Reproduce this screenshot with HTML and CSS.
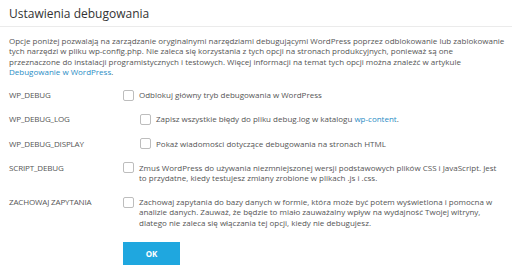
FILE: index.html
```html
<!DOCTYPE html>
<html lang="pl">
<head>
<meta charset="utf-8">
<title>Ustawienia debugowania</title>
<link rel="stylesheet" href="styles.css">
</head>
<body>
<div class="dialog">
  <header class="head">
    <h1 class="title">Ustawienia debugowania</h1>
  </header>
  <div class="content">
    <p class="intro">Opcje poniżej pozwalają na zarządzanie oryginalnymi narzędziami debugującymi WordPress poprzez odblokowanie lub zablokowanie tych narzędzi w pliku wp-config.php. Nie zaleca się korzystania z tych opcji na stronach produkcyjnych, ponieważ są one<br>przeznaczone do instalacji programistycznych i testowych. Więcej informacji na temat tych opcji można znaleźć w artykule <a class="link" href="#">Debugowanie w WordPress</a>.</p>

    <div class="row">
      <div class="label">WP_DEBUG</div>
      <label class="opt"><span class="box"></span><span class="txt">Odblokuj główny tryb debugowania w WordPress</span></label>
    </div>
    <div class="row">
      <div class="label">WP_DEBUG_LOG</div>
      <label class="opt nested"><span class="box"></span><span class="txt">Zapisz wszystkie błędy do pliku debug.log w katalogu <a class="link" href="#">wp-content</a>.</span></label>
    </div>
    <div class="row">
      <div class="label">WP_DEBUG_DISPLAY</div>
      <label class="opt nested"><span class="box"></span><span class="txt">Pokaż wiadomości dotyczące debugowania na stronach HTML</span></label>
    </div>
    <div class="row">
      <div class="label">SCRIPT_DEBUG</div>
      <label class="opt"><span class="box"></span><span class="txt">Zmuś WordPress do używania niezmniejszonej wersji podstawowych plików CSS i JavaScript. Jest to przydatne, kiedy testujesz zmiany zrobione w plikach .js i .css.</span></label>
    </div>
    <div class="row">
      <div class="label">ZACHOWAJ ZAPYTANIA</div>
      <label class="opt"><span class="box"></span><span class="txt">Zachowaj zapytania do bazy danych w formie, która może być potem wyświetlona i pomocna w analizie danych. Zauważ, że będzie to miało zauważalny wpływ na wydajność Twojej witryny, dlatego nie zaleca się włączania tej opcji, kiedy nie debugujesz.</span></label>
    </div>

    <div class="actions">
      <button class="btn" type="button">OK</button>
    </div>
  </div>
</div>
</body>
</html>
```

FILE: styles.css
```css
html, body {
  margin: 0;
  padding: 0;
  background: #ffffff;
}

body {
  font-family: "Open Sans", "Noto Sans", sans-serif;
  color: #555555;
  font-size: 8px;
  line-height: 10.3px;
}

.dialog {
  width: 512px;
}

.head {
  padding: 6px 9px 4px;
  border-bottom: 1px solid #ebebeb;
}

.title {
  margin: 0;
  font-size: 12px;
  line-height: 16px;
  font-weight: 400;
  color: #333333;
}

.content {
  padding: 9px 4px 0 9px;
}

.intro {
  margin: 0 0 13px;
}

.link {
  color: #2a8dc5;
  text-decoration: none;
}

.row {
  display: grid;
  grid-template-columns: 114px 1fr;
  margin-bottom: 13.7px;
}

.label {
  color: #555555;
  white-space: nowrap;
  letter-spacing: -0.15px;
}

.opt {
  display: flex;
  align-items: flex-start;
  gap: 5px;
  padding-right: 6px;
}

.opt.nested {
  padding-left: 17px;
}

.box {
  flex: none;
  width: 11px;
  height: 11px;
  box-sizing: border-box;
  border: 1px solid #bdbdbd;
  border-radius: 2px;
  background: #fff;
  margin-top: -0.5px;
}

.txt {
  flex: 1;
}

.actions {
  padding-left: 114px;
  margin-top: 3px;
}

.btn {
  width: 57px;
  height: 23px;
  border: 0;
  border-radius: 0;
  background: #1fa7df;
  color: #ffffff;
  font-family: "Open Sans", "Noto Sans", sans-serif;
  font-weight: 700;
  font-size: 8px;
  padding: 0;
}
```
